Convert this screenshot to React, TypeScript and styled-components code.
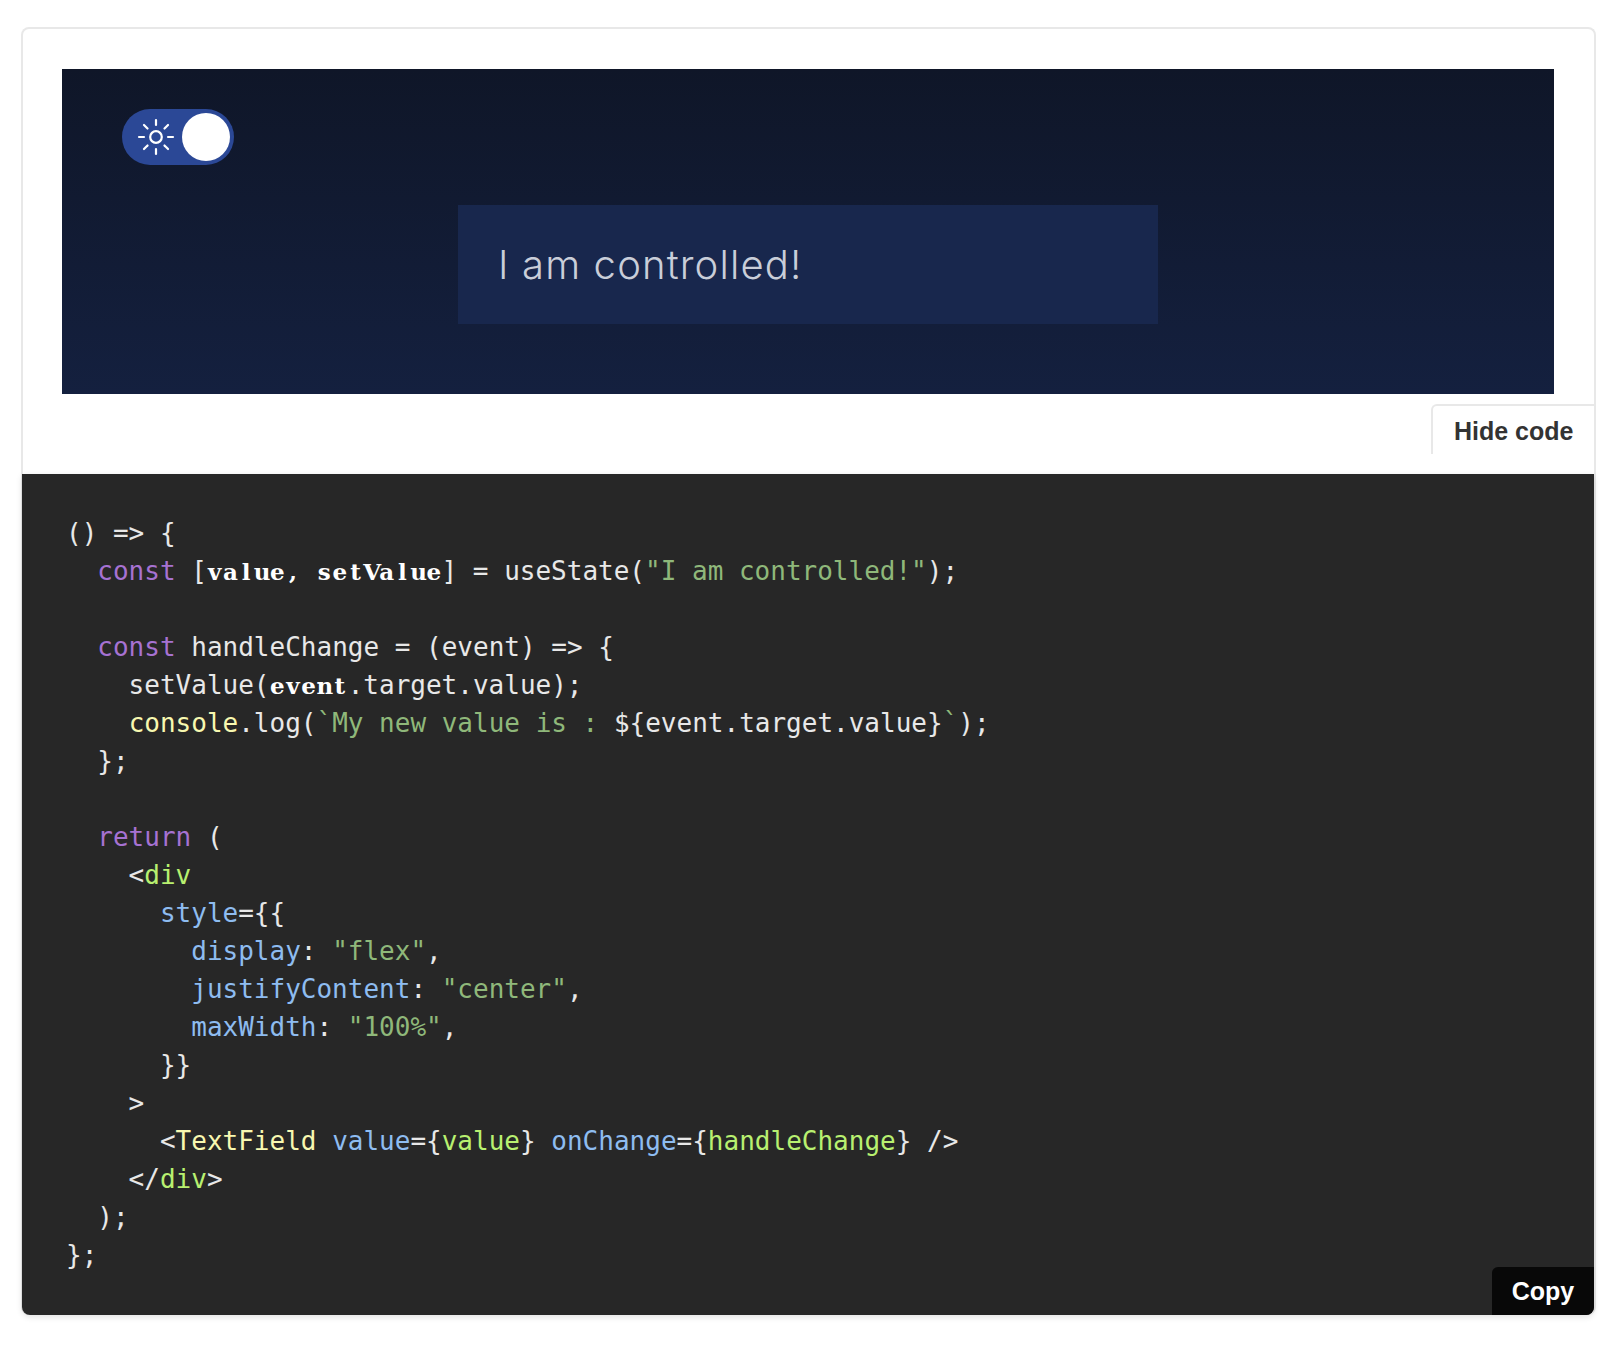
import React from "react";
import styled, { createGlobalStyle } from "styled-components";

type Kind = "plain" | "kw" | "str" | "bold" | "fn" | "attr" | "tag";
type Tok = [string, Kind?];

const code: Tok[][] = [
  [["() => {"]],
  [["  "], ["const", "kw"], [" ["], ["value, setValue", "bold"], ["] = useState("], ['"I am controlled!"', "str"], [");"]],
  [],
  [["  "], ["const", "kw"], [" handleChange = (event) => {"]],
  [["    setValue("], ["event", "bold"], [".target.value);"]],
  [["    "], ["console", "fn"], [".log("], ["`My new value is : ", "str"], ["${event.target.value}"], ["`", "str"], [");"]],
  [["  };"]],
  [],
  [["  "], ["return", "kw"], [" ("]],
  [["    <"], ["div", "tag"]],
  [["      "], ["style", "attr"], ["={{"]],
  [["        "], ["display", "attr"], [": "], ['"flex"', "str"], [","]],
  [["        "], ["justifyContent", "attr"], [": "], ['"center"', "str"], [","]],
  [["        "], ["maxWidth", "attr"], [": "], ['"100%"', "str"], [","]],
  [["      }}"]],
  [["    >"]],
  [["      <"], ["TextField", "fn"], [" "], ["value", "attr"], ["={"], ["value", "tag"], ["} "], ["onChange", "attr"], ["={"], ["handleChange", "tag"], ["} />"]],
  [["    </"], ["div", "tag"], [">"]],
  [["  );"]],
  [["};"]],
];

const colours: Record<Kind, string> = {
  plain: "#e8e8e8",
  kw: "#a672d2",
  str: "#8fb87a",
  bold: "#ffffff",
  fn: "#f8f8b0",
  attr: "#8ebcf0",
  tag: "#b8f070",
};

const rays = [0, 45, 90, 135, 180, 225, 270, 315];

const SunIcon = () => (
  <svg width="38" height="38" viewBox="0 0 38 38" fill="none" stroke="#fff" strokeWidth="2.2" strokeLinecap="round">
    <circle cx="19" cy="19" r="5.8" />
    {rays.map((deg) => (
      <line key={deg} x1="19" y1="7" x2="19" y2="2" transform={`rotate(${deg} 19 19)`} />
    ))}
  </svg>
);

const App = () => {
  return (
    <>
      <GlobalStyle />
      <Page>
        <Card>
          <Preview>
            <Toggle>
              <SunIcon />
              <Knob />
            </Toggle>
            <InputBox>I am controlled!</InputBox>
          </Preview>
          <TabRow>
            <Tab>Hide code</Tab>
          </TabRow>
          <CodePanel>
            <Code>
              {code.map((line, i) => (
                <Line key={i}>
                  {line.map(([text, kind], j) =>
                    kind === "bold" ? (
                      <span key={j} aria-label={text}>
                        {text.split("").map((ch, k) => (
                          <BoldChar key={k}>{ch}</BoldChar>
                        ))}
                      </span>
                    ) : (
                      <Token key={j} $kind={kind ?? "plain"}>
                        {text}
                      </Token>
                    )
                  )}
                </Line>
              ))}
            </Code>
            <CopyButton>Copy</CopyButton>
          </CodePanel>
        </Card>
      </Page>
    </>
  );
};

export default App;

const GlobalStyle = createGlobalStyle`
  html, body {
    margin: 0;
    padding: 0;
    background: #fff;
  }
`;

const Page = styled.div`
  min-height: 1352px;
  box-sizing: border-box;
  padding: 27px 24px 0 21px;
  font-family: "Liberation Sans", Arial, sans-serif;
`;

const Card = styled.div`
  border: 2px solid #e8e8e8;
  border-bottom: 0;
  border-radius: 8px;
  background: #fff;
`;

const Preview = styled.div`
  margin: 40px 40px 0 39px;
  height: 325px;
  box-sizing: border-box;
  padding: 40px 60px 0;
  background: linear-gradient(180deg, #0f1628 0%, #14203f 100%);
`;

const Toggle = styled.div`
  width: 112px;
  height: 56px;
  box-sizing: border-box;
  padding: 0 4px 0 15px;
  border-radius: 28px;
  background: #2b4896;
  display: flex;
  align-items: center;
  justify-content: space-between;
`;

const Knob = styled.div`
  width: 48px;
  height: 48px;
  border-radius: 50%;
  background: #fff;
`;

const InputBox = styled.div`
  width: 700px;
  height: 119px;
  box-sizing: border-box;
  margin: 40px auto 0;
  padding: 0 40px;
  display: flex;
  align-items: center;
  background: #18274d;
  color: #c9ced9;
  font-family: Inter, sans-serif;
  font-weight: 300;
  font-size: 40px;
  letter-spacing: 1.15px;
`;

const TabRow = styled.div`
  height: 80px;
  box-sizing: border-box;
  padding-top: 10px;
  display: flex;
  justify-content: flex-end;
  align-items: flex-start;
`;

const Tab = styled.div`
  width: 163px;
  height: 50px;
  box-sizing: border-box;
  padding: 3px 0 0 21px;
  border-top: 2px solid #e8e8e8;
  border-left: 2px solid #e8e8e8;
  border-top-left-radius: 6px;
  display: flex;
  align-items: center;
  color: #333;
  font-weight: 700;
  font-size: 25px;
`;

const CodePanel = styled.div`
  position: relative;
  margin-left: -1px;
  box-sizing: border-box;
  padding: 40px 44px 0;
  height: 841px;
  background: #272727;
  border-radius: 0 0 8px 8px;
  box-shadow: 0 2px 6px rgba(0, 0, 0, 0.12);
`;

const Code = styled.pre`
  margin: 0;
  font-family: "DejaVu Sans Mono", monospace;
  font-size: 26px;
  line-height: 38px;
`;

const Line = styled.div`
  height: 38px;
`;

const Token = styled.span<{ $kind: Kind }>`
  color: ${(p) => colours[p.$kind]};
`;

const BoldChar = styled.span`
  display: inline-block;
  width: 15.65px;
  text-align: center;
  color: #fff;
  font-family: "DejaVu Serif", serif;
  font-weight: 700;
  font-size: 23px;
  line-height: 1;
`;

const CopyButton = styled.div`
  position: absolute;
  right: 0;
  bottom: 0;
  width: 102px;
  height: 48px;
  box-sizing: border-box;
  padding-top: 1px;
  display: flex;
  align-items: center;
  justify-content: center;
  background: #080808;
  color: #fff;
  font-weight: 700;
  font-size: 25px;
  border-radius: 6px 0 8px 0;
`;
